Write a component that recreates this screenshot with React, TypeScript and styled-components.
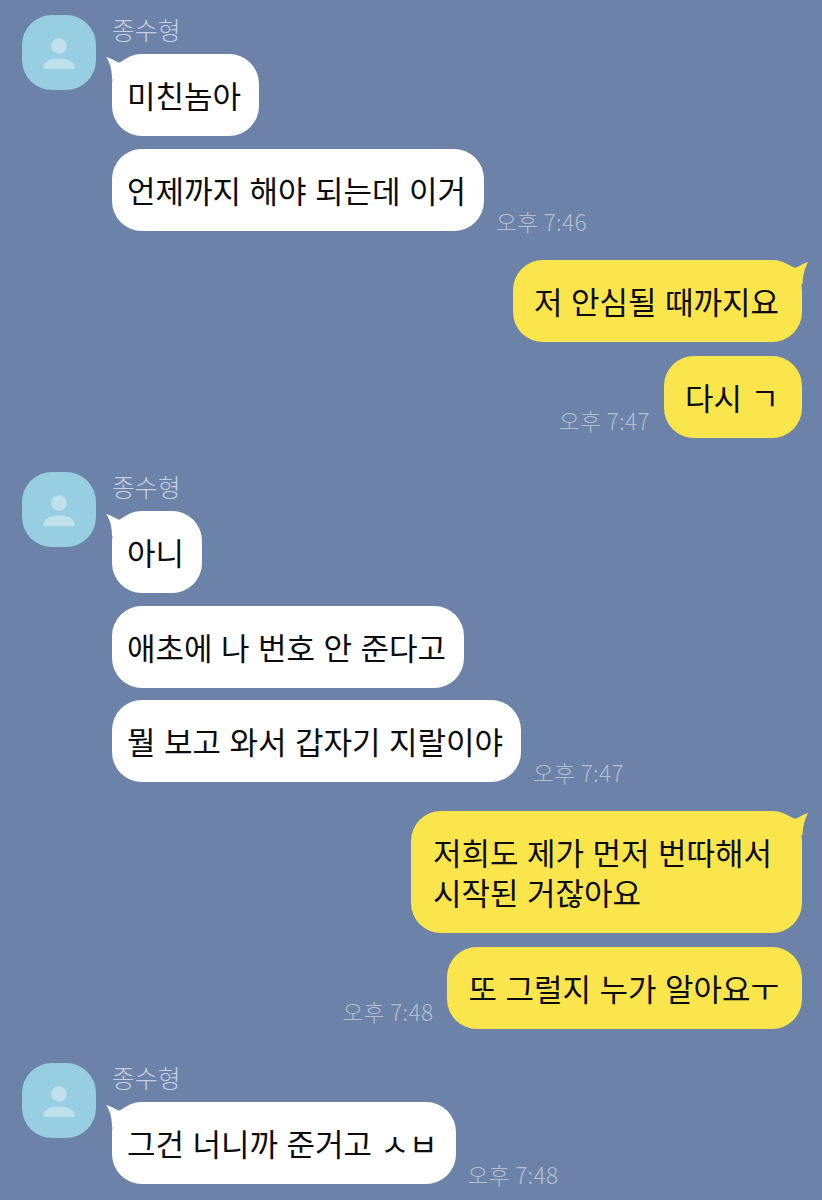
import React from "react";
import styled, { createGlobalStyle } from "styled-components";

const Global = createGlobalStyle`
  html, body { margin: 0; padding: 0; background: #6d82a8; }
  #root { height: 1200px; overflow: hidden; }
`;

const Chat = styled.div`
  box-sizing: border-box;
  width: 822px;
  height: 1200px;
  padding: 15px 20px 0 22px;
  background: #6d82a8;
  font-family: "Noto Sans CJK KR", "Noto Sans", sans-serif;
  display: flex;
  flex-direction: column;
`;

const Incoming = styled.section<{ $after: number }>`
  display: flex;
  gap: 16px;
  margin-top: ${(p) => p.$after}px;
`;

const Avatar = styled.div`
  width: 74px;
  height: 75px;
  flex: none;
  border-radius: 30px;
  background: #97cee1;
  display: flex;
  align-items: center;
  justify-content: center;
`;

const Stack = styled.div`
  display: flex;
  flex-direction: column;
  align-items: flex-start;
  gap: 12.5px;
`;

const Lead = styled.div`
  display: flex;
  flex-direction: column;
  align-items: flex-start;
`;

const Name = styled.div`
  height: 26px;
  margin-bottom: 13px;
  font-size: 24.8px;
  font-weight: 300;
  line-height: 28px;
  color: #c3d0e2;
`;

const Row = styled.div<{ $mine?: boolean }>`
  display: flex;
  align-items: flex-end;
  gap: ${(p) => (p.$mine ? 14 : 12)}px;
`;

const Outgoing = styled.section<{ $after: number }>`
  display: flex;
  flex-direction: column;
  align-items: flex-end;
  gap: 14px;
  margin-top: ${(p) => p.$after}px;
`;

const Bubble = styled.div<{ $mine?: boolean; $wrapped?: boolean }>`
  position: relative;
  box-sizing: border-box;
  padding: ${(p) =>
    p.$wrapped
      ? "21px 30px 21px 22px"
      : p.$mine
        ? "21px 23px 21px 21px"
        : "21px 18px 21px 15px"};
  border-radius: 30px;
  background: ${(p) => (p.$mine ? "#fbe54c" : "#ffffff")};
  color: #0c0c0c;
  font-size: 31px;
  font-weight: 400;
  word-spacing: 1.5px;
  line-height: 40px;
  white-space: pre;
`;

const Time = styled.span<{ $mine?: boolean }>`
  font-size: 22.6px;
  font-weight: 300;
  letter-spacing: 0.35px;
  line-height: 26px;
  color: #b2bfd5;
  margin-bottom: ${(p) => (p.$mine ? 4 : -4)}px;
`;

const TailLeft = styled.svg`
  position: absolute;
  left: -7px;
  top: 3px;
  width: 24px;
  height: 22px;
`;

const TailRight = styled.svg`
  position: absolute;
  right: -6px;
  top: 2px;
  width: 26px;
  height: 22px;
`;

const Person = () => (
  <svg width="34" height="34" viewBox="0 0 34 34" aria-hidden="true">
    <circle cx="17" cy="10" r="7.8" fill="#c0e0ec" />
    <path d="M1.3 32c0-6.500 7-9.500 15.700-9.500S32.700 25.500 32.700 32c0 .6-.4 1-1 1H2.300c-.6 0-1-.4-1-1z" fill="#c0e0ec" />
  </svg>
);

const Left = () => (
  <TailLeft viewBox="0 0 24 22" aria-hidden="true">
    <path d="M1 0C5 1 10 4 14 5.700C16 5 18 3.500 20 2.300L24 2.300V22H7C7 14 5.500 6 1 0Z" fill="#ffffff" />
  </TailLeft>
);

const Right = () => (
  <TailRight viewBox="0 0 26 22" aria-hidden="true">
    <path d="M26 0C22 1 18 4 13.700 5.700C10 5 7 3 3 1L0 1V22H20.500C21 14 22 8 26 0Z" fill="#fbe54c" />
  </TailRight>
);

export default function App() {
  return (
    <>
      <Global />
      <Chat>
        <Incoming $after={0}>
          <Avatar><Person /></Avatar>
          <Stack>
            <Lead>
              <Name>종수형</Name>
              <Bubble><Left />미친놈아</Bubble>
            </Lead>
            <Row><Bubble>언제까지 해야 되는데 이거</Bubble><Time>오후 7:46</Time></Row>
          </Stack>
        </Incoming>
        <Outgoing $after={29.5}>
          <Bubble $mine><Right />저 안심될 때까지요</Bubble>
          <Row $mine><Time $mine>오후 7:47</Time><Bubble $mine>다시 ㄱ</Bubble></Row>
        </Outgoing>
        <Incoming $after={34}>
          <Avatar><Person /></Avatar>
          <Stack>
            <Lead>
              <Name>종수형</Name>
              <Bubble><Left />아니</Bubble>
            </Lead>
            <Row><Bubble>애초에 나 번호 안 준다고</Bubble></Row>
            <Row><Bubble>뭘 보고 와서 갑자기 지랄이야</Bubble><Time>오후 7:47</Time></Row>
          </Stack>
        </Incoming>
        <Outgoing $after={29}>
          <Bubble $mine $wrapped><Right />{"저희도 제가 먼저 번따해서\n시작된 거잖아요"}</Bubble>
          <Row $mine><Time $mine>오후 7:48</Time><Bubble $mine>또 그럴지 누가 알아요ㅜ</Bubble></Row>
        </Outgoing>
        <Incoming $after={34}>
          <Avatar><Person /></Avatar>
          <Stack>
            <Lead>
              <Name>종수형</Name>
              <Row>
                <Bubble><Left />그건 너니까 준거고 ㅅㅂ</Bubble>
                <Time>오후 7:48</Time>
              </Row>
            </Lead>
          </Stack>
        </Incoming>
      </Chat>
    </>
  );
}
